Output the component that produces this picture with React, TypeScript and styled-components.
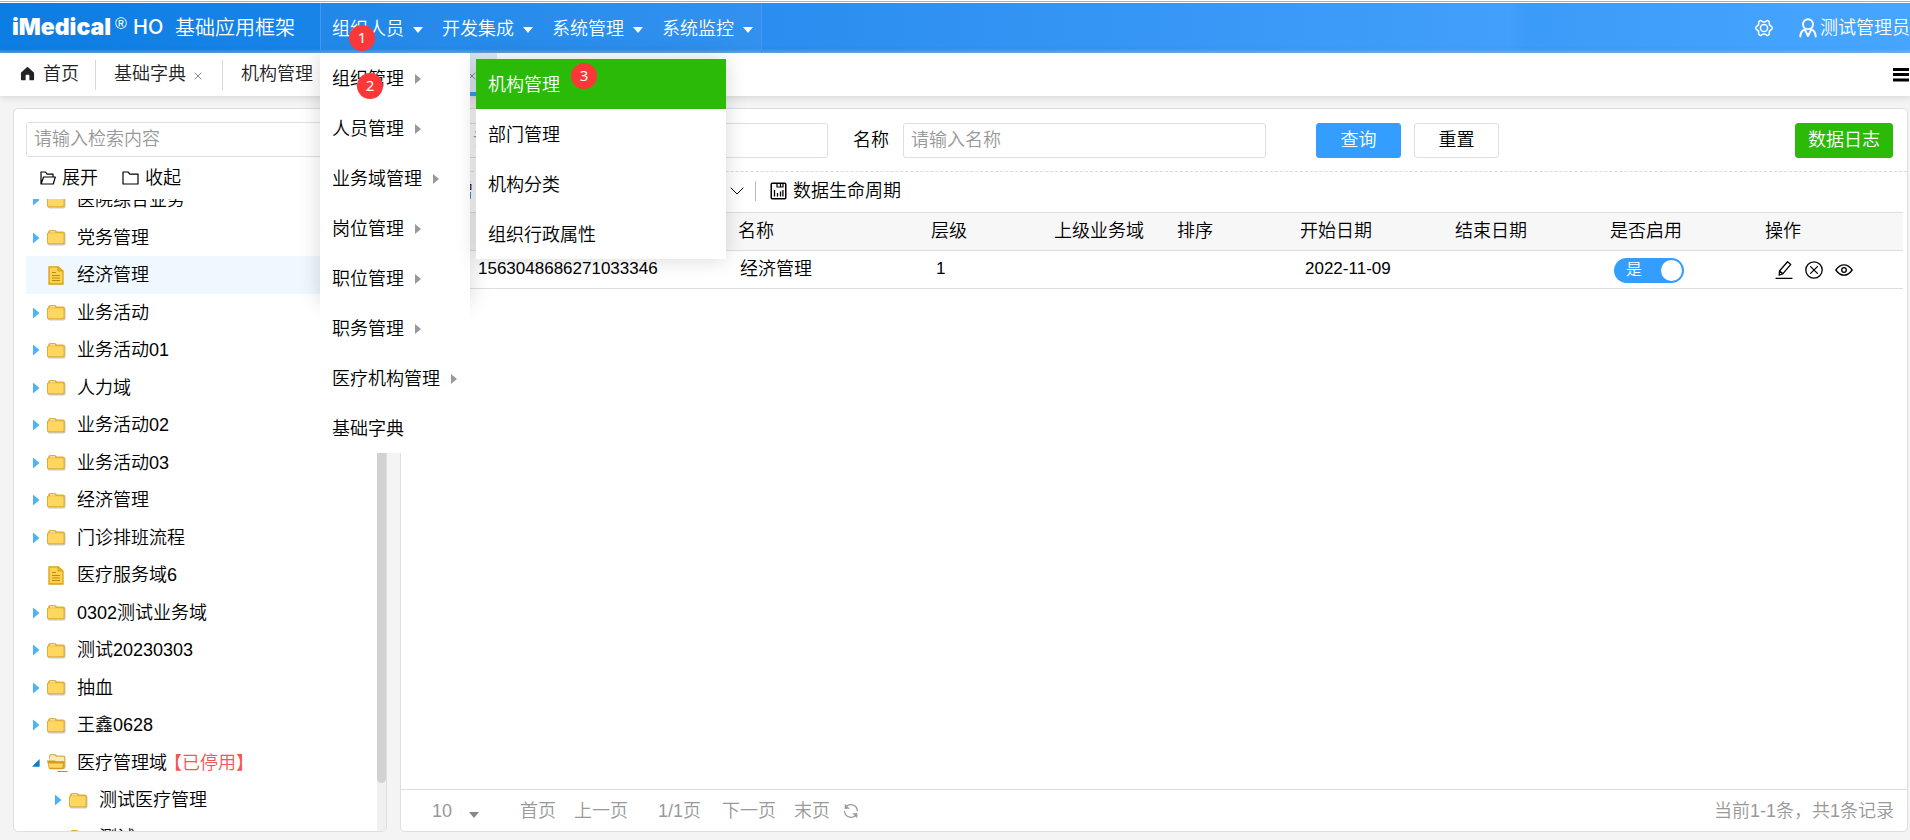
import React from 'react';
import styled, { createGlobalStyle, css } from 'styled-components';

const GlobalStyle = createGlobalStyle`
  * { box-sizing: border-box; }
  body {
    margin: 0;
    background: #f4f4f4;
    color: #000;
    font-family: "Liberation Sans", "Noto Sans CJK SC", sans-serif;
    font-size: 18px;
    font-weight: 350;
    line-height: 26px;
  }
  button, input, select {
    font: inherit;
    color: inherit;
  }
  button {
    border: 0;
    padding: 0;
    background: none;
    cursor: pointer;
    white-space: nowrap;
  }
  a { color: inherit; text-decoration: none; }
  ul { list-style: none; margin: 0; padding: 0; }
`;

const Page = styled.div`
  display: flex;
  flex-direction: column;
  height: 100vh;
  min-width: 1500px;
  overflow: hidden;
`;

const TopRule = styled.div`
  flex: none;
  height: 3px;
  background: linear-gradient(#fff 1px, #b0b0b0 1px, #b0b0b0 2px, #fff 2px);
`;

const Header = styled.header`
  display: flex;
  align-items: stretch;
  flex: none;
  height: 50px;
  color: #fff;
  background:
    linear-gradient(to bottom, transparent 46px, rgba(190, 205, 225, 0.45) 50px),
    linear-gradient(to right, #0c7de3, #2a8def 40%, #429ffb 79%, #3b9bf8 80%, #46a6ff);
`;

const Brand = styled.h1`
  display: flex;
  align-items: center;
  flex: none;
  width: 320px;
  margin: 0;
  padding: 0 0 2px 12px;
  font-size: 20px;
  font-weight: 350;
  line-height: 28px;
`;

const BrandName = styled.span`
  width: 103px;
  font-family: Inter, sans-serif;
  font-size: 23px;
  font-weight: 900;
`;

const BrandMark = styled.span`
  width: 18px;
  padding-bottom: 6px;
  font-size: 16px;
  line-height: 16px;
`;

const BrandSuffix = styled.span`
  width: 42px;
  font-family: Inter, sans-serif;
  font-size: 20px;
  font-weight: 500;
`;

const BrandTitle = styled.span`
  padding-top: 2px;
`;

const Nav = styled.nav`
  display: flex;
  border: 1px solid #4b93f6;
  border-width: 0 1px;
  background: rgba(255, 255, 255, 0.04);
`;

const NavItem = styled.div`
  position: relative;
  width: 110px;
`;

const NavButton = styled.button`
  display: flex;
  align-items: center;
  gap: 9px;
  height: 50px;
  padding: 1px 0 0 11px;
`;

const Caret = styled.span<{ $dim?: boolean }>`
  border: 5px solid transparent;
  border-top: 6px solid ${p => (p.$dim ? '#888' : '#fff')};
  border-bottom: 0;
  margin-top: ${p => (p.$dim ? 8 : 3)}px;
`;

const Menu = styled.ul`
  position: absolute;
  z-index: 5;
  top: 50px;
  left: -1px;
  width: 150px;
  color: #000;
  &::before {
    content: '';
    position: absolute;
    inset: 0 0 150px;
    box-shadow: 0 0 20px rgba(0, 0, 0, 0.16);
    clip-path: inset(0 -30px -30px);
  }
`;

const MenuItem = styled.li<{ $active?: boolean }>`
  position: relative;
  background: ${p => (p.$active ? '#2bba08' : '#fff')};
  color: ${p => (p.$active ? '#fff' : '#000')};
`;

const MenuLink = styled.a`
  display: flex;
  align-items: center;
  gap: 11px;
  height: 50px;
  padding: 2px 0 0 12px;
  white-space: nowrap;
`;

const SideCaret = styled.span`
  border: 5px solid transparent;
  border-left: 6px solid #959a9f;
  border-right: 0;
`;

const SubMenu = styled.ul`
  position: absolute;
  z-index: 6;
  top: 6px;
  left: 156px;
  width: 250px;
  box-shadow: 0 0 20px rgba(0, 0, 0, 0.16);
`;

const Step = styled.span<{ $x: number; $y: number }>`
  position: absolute;
  z-index: 8;
  left: ${p => p.$x}px;
  top: ${p => p.$y}px;
  width: 26px;
  height: 26px;
  border-radius: 13px;
  background: #fb3838;
  color: #fff;
  font-family: "Noto Sans", sans-serif;
  font-weight: 400;
  font-size: 15px;
  line-height: 24px;
  text-align: center;
`;

const UserArea = styled.div`
  display: flex;
  align-items: center;
  gap: 26px;
  margin-left: auto;
`;

const UserButton = styled.button`
  display: flex;
  align-items: center;
  gap: 3px;
  svg { display: block; }
`;

const TabBar = styled.div`
  display: flex;
  align-items: center;
  flex: none;
  height: 43px;
  background: #fff;
  color: #222;
  box-shadow: 0 1px 8px rgba(0, 0, 0, 0.14);
`;

const Tab = styled.div<{ $active?: boolean }>`
  display: flex;
  align-items: center;
  gap: 8px;
  height: 30px;
  padding: 0 20px 2px 18px;
  border-right: 1px solid #d8d8d8;
  white-space: nowrap;
  &:first-child { padding: 0 16px 2px 20px; }
  ${p =>
    p.$active &&
    css`
      height: 43px;
      padding: 2px 21px 0 20px;
      border-right: 0;
      border-bottom: 4px solid #339eff;
      background: linear-gradient(to right, #e9f5fd, #dcebf6);
      color: #339eff;
    `}
`;

const TabClose = styled.button`
  display: flex;
  width: 8px;
  color: #888;
  margin-top: 4px;
`;

const TabList = styled.button`
  width: 16px;
  margin: 0 1px 0 auto;
  svg { display: block; }
`;

const Main = styled.main`
  display: flex;
  flex: 1;
  gap: 13px;
  min-height: 0;
  padding: 12px 2px 8px 13px;
`;

const Panel = styled.section`
  display: flex;
  flex-direction: column;
  flex: 1;
  min-width: 0;
  background: #fff;
  border: 1px solid #dedede;
  border-radius: 5px;
  overflow: hidden;
`;

const TreePanel = styled(Panel)`
  flex: 0 0 374px;
`;

const TextBox = styled.input`
  height: 35px;
  min-width: 0;
  padding: 0 7px;
  border: 1px solid #dcdfe6;
  border-radius: 3px;
  background: #fff;
  &::placeholder { color: #999; opacity: 1; }
`;

const TreeSearch = styled(TextBox)`
  margin: 13px 12px 0;
`;

const TreeTools = styled.div`
  display: flex;
  gap: 24px;
  height: 42px;
  padding-left: 26px;
`;

const IconButton = styled.button`
  display: flex;
  align-items: center;
  gap: 6px;
`;

const TreeView = styled.div`
  display: flex;
  flex: 1;
  min-height: 0;
  padding-left: 12px;
  overflow: hidden;
`;

const TreeRows = styled.ul`
  flex: 1;
  margin-top: -18px;
`;

const TreeRow = styled.li<{ $selected?: boolean; $level: number }>`
  display: flex;
  align-items: center;
  height: 37px;
  padding-left: ${p => 6 + p.$level * 22}px;
  background: ${p => (p.$selected ? '#eff7ff' : 'transparent')};
  &:nth-child(odd) { height: 38px; }
`;

const Toggle = styled.span`
  display: flex;
  width: 14px;
`;

const NodeIcon = styled.span`
  display: flex;
  width: 31px;
`;

const Disabled = styled.span`
  margin-left: -3px;
  color: #f75353;
`;

const ScrollTrack = styled.div`
  width: 9px;
  background: #f0f0f0;
`;

const ScrollThumb = styled.div`
  height: calc(100% - 48px);
  border-radius: 5px;
  background: #d2d2d2;
`;

const SearchForm = styled.form`
  display: flex;
  align-items: center;
  flex: none;
  height: 63px;
  padding: 0 14px;
  border-bottom: 1px dashed #dcdcdc;
`;

const Field = styled.label`
  display: flex;
  align-items: center;
  gap: 14px;
  margin-right: 25px;
  white-space: nowrap;
  ${TextBox} { width: 363px; }
`;

const Button = styled.button<{ $kind?: 'primary' | 'success' }>`
  min-width: 85px;
  height: 35px;
  margin-right: 13px;
  padding: 0 12px;
  border-radius: 3px;
  border: 1px solid ${p => (p.$kind === 'primary' ? '#339eff' : p.$kind === 'success' ? '#2bba08' : '#dcdfe6')};
  background: ${p => (p.$kind === 'primary' ? '#339eff' : p.$kind === 'success' ? '#2bba08' : '#fff')};
  color: ${p => (p.$kind ? '#fff' : '#000')};
`;

const FormButtons = styled.div`
  display: flex;
  flex: 1;
  margin-left: 25px;
  ${Button}:last-child { margin: 0 0 0 auto; }
`;

const Toolbar = styled.div`
  display: flex;
  align-items: center;
  flex: none;
  height: 40px;
  padding: 0 14px 2px;
`;

const AddButton = styled(IconButton)`
  width: 315px;
`;

const Divider = styled.span`
  width: 1px;
  height: 20px;
  margin: 0 14px 0 11px;
  background: #bbb;
`;

const Table = styled.table`
  width: calc(100% - 4px);
  table-layout: fixed;
  border-collapse: collapse;
  text-align: left;
  th, td {
    height: 38px;
    padding: 0 0 2px 9px;
    border-bottom: 1px solid #dedede;
    font-weight: 350;
    white-space: nowrap;
  }
  thead tr {
    border-top: 1px solid #dedede;
    background: #f7f7f7;
  }
  td { padding-left: 11px; }
`;

const Numeric = styled.td`
  && { padding-left: 10px; }
  font-size: 17px;
`;

const DateCell = styled(Numeric)`
  && { padding-left: 14px; }
`;

const Switch = styled.label`
  display: flex;
  align-items: center;
  justify-content: space-between;
  width: 70px;
  height: 25px;
  margin: 3px 0 0 2px;
  padding: 0 2px 0 12px;
  border-radius: 13px;
  background: #339eff;
  color: #fff;
  font-size: 16px;
  input {
    appearance: none;
    width: 21px;
    height: 21px;
    margin: 0;
    border-radius: 11px;
    background: #fff;
  }
`;

const Actions = styled.div`
  display: flex;
  gap: 12px;
  padding: 2px 0 0 8px;
  svg { display: block; }
`;

const Pager = styled.footer`
  display: flex;
  align-items: center;
  flex: none;
  height: 42px;
  margin-top: auto;
  padding: 0 13px 0 31px;
  border-top: 1px solid #dedede;
  color: #999;
`;

const PageSize = styled.div`
  display: flex;
  align-items: center;
  margin-right: 41px;
  select {
    appearance: none;
    width: 37px;
    padding: 0;
    border: 0;
    outline: 0;
    background: none;
  }
`;

const PageLinks = styled.div`
  display: flex;
  align-items: center;
  gap: 18px;
`;

const PageNow = styled.span`
  padding: 0 3px 0 12px;
`;

const Reload = styled.button`
  margin-left: -5px;
  svg { display: block; }
`;

const Total = styled.span`
  margin-left: auto;
`;

const line = { fill: 'none', stroke: 'currentColor', strokeLinecap: 'round', strokeLinejoin: 'round' } as const;

const GearIcon = () => (
  <svg width="18" height="18" viewBox="0 0 18 18" {...line} strokeWidth="1.5">
    <path d="M5 1.600Q5.800 1.200 6.600 2.100Q9 3.700 11.400 2.100Q12.200 1.200 13 1.600Q14.600 2.600 14.300 3.600Q13.800 6.200 16.200 7.300Q17.200 7.700 17.200 9Q17.200 10.300 16.200 10.700Q13.800 11.800 14.300 14.400Q14.600 15.400 13 16.400Q12.200 16.800 11.400 15.900Q9 14.300 6.600 15.900Q5.800 16.800 5 16.400Q3.400 15.400 3.700 14.400Q4.200 11.800 1.800 10.700Q.8 10.300 .8 9Q.8 7.700 1.800 7.300Q4.200 6.200 3.700 3.600Q3.400 2.600 5 1.600z" />
    <circle cx="9" cy="9" r="3.600" />
  </svg>
);

const UserIcon = () => (
  <svg width="18" height="20" viewBox="0 0 18 20" {...line} strokeWidth="1.900">
    <circle cx="9" cy="6.200" r="5" />
    <path d="M1.300 18.600c.1-3.600 1.800-6 4.400-7.200L9 18l3.300-6.600c2.600 1.200 4.300 3.600 4.400 7.200" />
  </svg>
);

const HomeIcon = () => (
  <svg width="15" height="15" viewBox="0 0 16 15">
    <path d="M8 .5Q8.500 .5 9 1l6 5.600V14q0 .8-.8.800H10V9.500q0-.8-.8-.8H6.800q-.8 0-.8.8v5.300H1.800Q1 14.800 1 14V6.600L7 1Q7.500.5 8 .5z" fill="#222" />
  </svg>
);

const CrossIcon = () => (
  <svg width="8" height="8" viewBox="0 0 8 8" {...line}>
    <path d="M1 1l6 6M7 1 1 7" />
  </svg>
);

const FolderOpenLine = () => (
  <svg width="16" height="14" viewBox="0 0 16 14" {...line} strokeWidth="1.200">
    <path d="M1 13V1h4.500l1.600 2.200H13V6M1 13 3.600 6H15.300l-2 7z" />
  </svg>
);

const FolderLine = () => (
  <svg width="17" height="14" viewBox="0 0 17 14" {...line} strokeWidth="1.200">
    <path d="M1 1h5l1.800 2.200H16V13H1z" />
  </svg>
);

const ToggleIcon = ({ open }: { open?: boolean }) =>
  open ? (
    <svg width="8" height="8" viewBox="0 0 8 8"><path d="M7.600 0v7.700H0z" fill="#0a7bd0" /></svg>
  ) : (
    <svg width="8" height="12" viewBox="1 0 8 12"><path d="M2 .5 8.500 6 2 11.500z" fill="#4db3f8" /></svg>
  );

const FolderIcon = () => (
  <svg width="20" height="17" viewBox="0 0 20 17">
    <rect x="1.500" y="3" width="18" height="13.500" rx="2" fill="#b9b3a6" opacity=".7" />
    <path d="M2 4Q2 1 4.500 1h4Q10 1 11 2.500h6q1.800 0 1.800 1.800v9.200q0 1.800-1.800 1.800H2.800Q1 15.300 1 13.500V4z" fill="#dfae3e" />
    <path d="M4 2.200h4.500l1 1.200H4z" fill="#ffefb8" />
    <rect x="2" y="4.200" width="15.500" height="10" rx="1.200" fill="#ffd75e" />
  </svg>
);

const FolderOpenIcon = () => (
  <svg width="22" height="19" viewBox="0 0 22 19">
    <path d="M3 3.500Q3 1 5.500 1h3Q10 1 11 2.500h6q2.500 0 2.500 2V14q0 2-2 2H5z" fill="#d8ae55" />
    <path d="M4 4q0-1.700 1.500-1.700h3l1.500 1.500h7q1.200 0 1.200 1V8H4z" fill="#fdebb4" />
    <path d="M1 7.500h8l1 1.200h8.300l-1 6q-.3 1.500-1.800 1.500H4.500Q3 16.200 2.700 14.700z" fill="#d39b25" />
    <path d="M2.300 10.500H17l-.7 4.300H3.600z" fill="#ffd75e" />
    <path d="M11.500 18.500h10" stroke="#4b9df5" />
  </svg>
);

const FileIcon = () => (
  <svg width="20" height="19" viewBox="0 0 20 19">
    <path d="M3 .8h9.200L17 5v13H3z" fill="#fcd34f" stroke="#d9a016" strokeWidth="1.300" />
    <path d="M12 .8V5h5z" fill="#f0b92d" stroke="#d9a016" />
    <path d="M6 6.500h4M6 9.500h8M6 12h8M6 14.500h8" stroke="#c48a0c" strokeWidth="1.200" />
  </svg>
);

const AddIcon = () => (
  <svg width="16" height="16" viewBox="0 0 16 16" {...line}><path d="M8 2v12M2 8h12" /></svg>
);

const ChevronIcon = () => (
  <svg width="14" height="8" viewBox="0 0 14 8" {...line}><path d="M1 1l6 6 6-6" /></svg>
);

const LifecycleIcon = () => (
  <svg width="17" height="18" viewBox="0 0 17 18" fill="none" stroke="#000">
    <rect x="1.250" y="1.250" width="14.500" height="15.500" rx="1" strokeWidth="1.500" />
    <path d="M7 1.500V5h6V1.500M10.500 2v3" strokeWidth="1.200" />
    <path d="M4.500 8v6.500M7.500 11v3.500M10.500 9.500v5M12.900 8v6.500" strokeWidth="1.300" />
  </svg>
);

const EditIcon = () => (
  <svg width="18" height="20" viewBox="0 0 18 20" {...line} strokeWidth="1.300">
    <path d="M4.200 15.200 4.500 11 12.500 1.800l3.300 2.600L8 13.700zM4.500 11 8 13.700M1 18.300h16" />
  </svg>
);

const StopIcon = () => (
  <svg width="18" height="20" viewBox="0 0 18 20" {...line} strokeWidth="1.300">
    <circle cx="9" cy="10" r="8.200" />
    <path d="M5.600 6.600l6.800 6.800M12.400 6.600l-6.800 6.800" />
  </svg>
);

const EyeIcon = () => (
  <svg width="18" height="20" viewBox="0 0 18 20" {...line} strokeWidth="1.300">
    <path d="M.8 10Q4.500 4.800 9 4.800T17.200 10Q13.500 15.200 9 15.200T.8 10z" />
    <circle cx="9" cy="10" r="2.300" />
  </svg>
);

const ReloadIcon = () => (
  <svg width="16" height="16" viewBox="0 0 16 16" {...line} strokeWidth="1.300">
    <path d="M2.200 5.200A6.500 6.500 0 0 1 14.400 7.500M13.800 10.800A6.500 6.500 0 0 1 1.600 8.500" />
    <path d="M2 1.500v4h4zM14 14.500v-4h-4z" fill="currentColor" strokeWidth=".5" />
  </svg>
);

type Node = { name: string; level?: number; kind?: 'file' | 'open'; selected?: boolean; disabled?: boolean };

const nodes: Node[] = [
  { name: '医院综合业务' },
  { name: '党务管理' },
  { name: '经济管理', kind: 'file', selected: true },
  { name: '业务活动' },
  { name: '业务活动01' },
  { name: '人力域' },
  { name: '业务活动02' },
  { name: '业务活动03' },
  { name: '经济管理' },
  { name: '门诊排班流程' },
  { name: '医疗服务域6', kind: 'file' },
  { name: '0302测试业务域' },
  { name: '测试20230303' },
  { name: '抽血' },
  { name: '王鑫0628' },
  { name: '医疗管理域', kind: 'open', disabled: true },
  { name: '测试医疗管理', level: 1 },
  { name: '测试', level: 1 },
];

const navItems = ['组织人员', '开发集成', '系统管理', '系统监控'];
const menuItems = ['组织管理', '人员管理', '业务域管理', '岗位管理', '职位管理', '职务管理', '医疗机构管理', '基础字典'];
const subItems = ['机构管理', '部门管理', '机构分类', '组织行政属性'];

const OrgMenu = () => (
  <Menu>
    {menuItems.map((item, i) => (
      <MenuItem key={item}>
        <MenuLink href="#">
          {item}
          {i < menuItems.length - 1 && <SideCaret />}
        </MenuLink>
        {i === 0 && (
          <>
            <Step $x={37} $y={20}>2</Step>
            <SubMenu>
              {subItems.map((sub, j) => (
                <MenuItem key={sub} $active={j === 0}>
                  <MenuLink href="#">{sub}</MenuLink>
                  {j === 0 && <Step $x={95} $y={4}>3</Step>}
                </MenuItem>
              ))}
            </SubMenu>
          </>
        )}
      </MenuItem>
    ))}
  </Menu>
);

export default function App() {
  return (
    <Page>
      <GlobalStyle />
      <TopRule />
      <Header>
        <Brand>
          <BrandName>iMedical</BrandName>
          <BrandMark>®</BrandMark>
          <BrandSuffix>HO</BrandSuffix>
          <BrandTitle>基础应用框架</BrandTitle>
        </Brand>
        <Nav>
          {navItems.map((item, i) => (
            <NavItem key={item}>
              <NavButton type="button">
                {item}
                <Caret />
              </NavButton>
              {i === 0 && (
                <>
                  <Step $x={28} $y={22}>1</Step>
                  <OrgMenu />
                </>
              )}
            </NavItem>
          ))}
        </Nav>
        <UserArea>
          <UserButton type="button" aria-label="设置"><GearIcon /></UserButton>
          <UserButton type="button"><UserIcon />测试管理员</UserButton>
        </UserArea>
      </Header>

      <TabBar>
        <Tab><HomeIcon />首页</Tab>
        <Tab>基础字典<TabClose type="button" aria-label="关闭"><CrossIcon /></TabClose></Tab>
        <Tab>机构管理<TabClose type="button" aria-label="关闭"><CrossIcon /></TabClose></Tab>
        <Tab $active>业务域管理<TabClose type="button" aria-label="关闭"><CrossIcon /></TabClose></Tab>
        <TabList type="button" aria-label="标签列表">
          <svg width="16" height="14" viewBox="0 0 16 14"><path d="M0 1.500h16M0 6.500h16M0 12h16" stroke="#000" strokeWidth="3" /></svg>
        </TabList>
      </TabBar>

      <Main>
        <TreePanel>
          <TreeSearch type="text" placeholder="请输入检索内容" aria-label="检索" />
          <TreeTools>
            <IconButton type="button"><FolderOpenLine />展开</IconButton>
            <IconButton type="button"><FolderLine />收起</IconButton>
          </TreeTools>
          <TreeView>
            <TreeRows>
              {nodes.map((node, i) => (
                <TreeRow key={i} $selected={node.selected} $level={node.level ?? 0}>
                  <Toggle>{node.kind !== 'file' && <ToggleIcon open={node.kind === 'open'} />}</Toggle>
                  <NodeIcon>
                    {node.kind === 'file' ? <FileIcon /> : node.kind === 'open' ? <FolderOpenIcon /> : <FolderIcon />}
                  </NodeIcon>
                  {node.name}
                  {node.disabled && <Disabled>【已停用】</Disabled>}
                </TreeRow>
              ))}
            </TreeRows>
            <ScrollTrack><ScrollThumb /></ScrollTrack>
          </TreeView>
        </TreePanel>

        <Panel>
          <SearchForm>
            <Field>编码<TextBox type="text" placeholder="请输入编码" /></Field>
            <Field>名称<TextBox type="text" placeholder="请输入名称" /></Field>
            <FormButtons>
              <Button type="button" $kind="primary">查询</Button>
              <Button type="button">重置</Button>
              <Button type="button" $kind="success">数据日志</Button>
            </FormButtons>
          </SearchForm>
          <Toolbar>
            <AddButton type="button"><AddIcon />新增</AddButton>
            <IconButton type="button" aria-label="更多"><ChevronIcon /></IconButton>
            <Divider />
            <IconButton type="button"><LifecycleIcon />数据生命周期</IconButton>
          </Toolbar>
          <Table>
            <colgroup>
              <col style={{ width: 67 }} />
              <col style={{ width: 261 }} />
              <col />
              <col style={{ width: 123 }} />
              <col style={{ width: 123 }} />
              <col style={{ width: 123 }} />
              <col style={{ width: 155 }} />
              <col style={{ width: 155 }} />
              <col style={{ width: 155 }} />
              <col style={{ width: 147 }} />
            </colgroup>
            <thead>
              <tr>
                <th />
                <th>编码</th>
                <th>名称</th>
                <th>层级</th>
                <th>上级业务域</th>
                <th>排序</th>
                <th>开始日期</th>
                <th>结束日期</th>
                <th>是否启用</th>
                <th>操作</th>
              </tr>
            </thead>
            <tbody>
              <tr>
                <td />
                <Numeric>1563048686271033346</Numeric>
                <td>经济管理</td>
                <DateCell>1</DateCell>
                <td />
                <td />
                <DateCell>2022-11-09</DateCell>
                <td />
                <td><Switch>是<input type="checkbox" role="switch" defaultChecked /></Switch></td>
                <td>
                  <Actions>
                    <button type="button" aria-label="编辑"><EditIcon /></button>
                    <button type="button" aria-label="停用"><StopIcon /></button>
                    <button type="button" aria-label="查看"><EyeIcon /></button>
                  </Actions>
                </td>
              </tr>
            </tbody>
          </Table>
          <Pager>
            <PageSize>
              <select aria-label="每页条数" defaultValue="10"><option>10</option></select>
              <Caret $dim />
            </PageSize>
            <PageLinks>
              <button type="button">首页</button>
              <button type="button">上一页</button>
              <PageNow>1/1页</PageNow>
              <button type="button">下一页</button>
              <button type="button">末页</button>
              <Reload type="button" aria-label="刷新"><ReloadIcon /></Reload>
            </PageLinks>
            <Total>当前1-1条，共1条记录</Total>
          </Pager>
        </Panel>
      </Main>
    </Page>
  );
}
